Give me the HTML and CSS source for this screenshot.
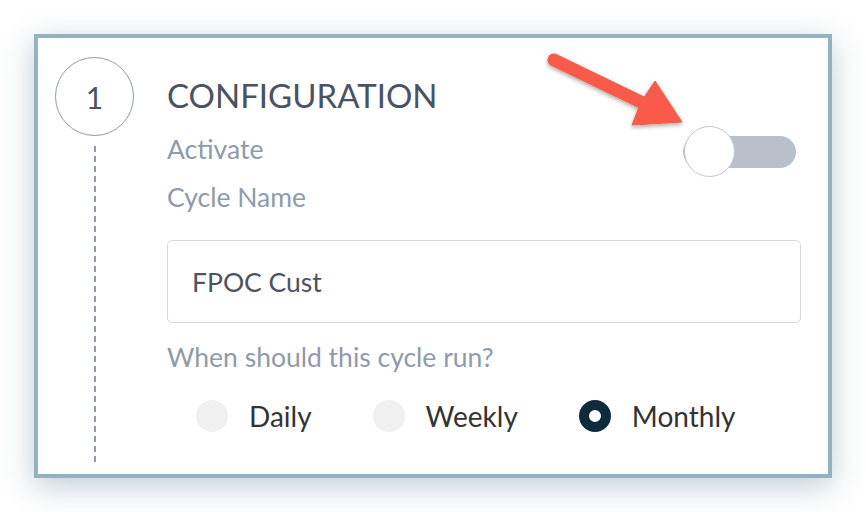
FILE: index.html
```html
<!DOCTYPE html>
<html>
<head>
<meta charset="utf-8">
<link rel="stylesheet" href="styles.css">
</head>
<body>
<div class="page">
  <section class="card">
    <div class="step-col">
      <div class="step-num">1</div>
      <div class="step-line"></div>
    </div>
    <div class="content">
      <h1 class="title">CONFIGURATION</h1>
      <div class="activate-row">
        <span class="label label-activate">Activate</span>
        <div class="toggle"><div class="toggle-knob"></div></div>
      </div>
      <div class="label label-cycle">Cycle Name</div>
      <div class="input">FPOC Cust</div>
      <div class="label label-when">When should this cycle run?</div>
      <div class="radios">
        <div class="radio-item"><span class="radio"></span><span class="radio-text">Daily</span></div>
        <div class="radio-item"><span class="radio"></span><span class="radio-text">Weekly</span></div>
        <div class="radio-item"><span class="radio radio-on"></span><span class="radio-text">Monthly</span></div>
      </div>
    </div>
  </section>
  <svg class="arrow" width="866" height="512" viewBox="0 0 866 512">
    <defs>
      <filter id="sh" x="-20%" y="-20%" width="140%" height="140%">
        <feDropShadow dx="0" dy="2" stdDeviation="2" flood-color="#000" flood-opacity="0.35"/>
      </filter>
    </defs>
    <g filter="url(#sh)" fill="#fa5a48" stroke="#fa5a48">
      <line x1="554" y1="60" x2="645" y2="104" stroke-width="13" stroke-linecap="round"/>
      <polygon points="682,122 655,81 641,102 632,125" stroke-width="1" stroke-linejoin="round"/>
    </g>
  </svg>
</div>
</body>
</html>
```
FILE: styles.css
```css
* { box-sizing: border-box; }
html, body { margin: 0; padding: 0; background: #ffffff; }
body { font-family: "Lato", "Open Sans", sans-serif; }

.page {
  position: relative;
  width: 866px;
  height: 512px;
  padding: 34px;
}

.card {
  width: 798px;
  height: 444px;
  border: 4px solid #94b2c2;
  background: #ffffff;
  box-shadow: 0 8px 30px rgba(60, 95, 120, 0.32);
  display: flex;
  padding: 19px 27px 8px 17px;
  column-gap: 33px;
}

.step-col {
  width: 79px;
  display: flex;
  flex-direction: column;
  align-items: center;
}

.step-num {
  width: 79px;
  height: 79px;
  border: 1.5px solid #8f9aab;
  border-radius: 50%;
  display: flex;
  align-items: center;
  justify-content: center;
  font-size: 30px;
  color: #4a5462;
  flex: none;
}

.step-line {
  margin-top: 10px;
  width: 2px;
  flex: 1;
  background: repeating-linear-gradient(to bottom, #8f9aab 0 6px, transparent 6px 10px);
}

.content {
  flex: 1;
  display: flex;
  flex-direction: column;
}

.title {
  margin: 18px 0 0;
  font-size: 33px;
  line-height: 40px;
  font-weight: 400;
  color: #4a5362;
}

.label {
  font-size: 26.5px;
  line-height: 32px;
  color: #8f9aab;
}

.activate-row {
  margin-top: 11px;
  height: 51px;
  display: flex;
  justify-content: space-between;
  align-items: flex-start;
}

.label-activate { margin-top: 7px; }

.toggle {
  position: relative;
  margin-right: 5px;
  width: 113px;
  height: 51px;
}
.toggle::before {
  content: "";
  position: absolute;
  left: 0;
  right: 0;
  top: 10px;
  height: 32px;
  border-radius: 16px;
  background: #b9c0c8;
}
.toggle-knob {
  position: absolute;
  left: 1px;
  top: 0;
  width: 51px;
  height: 51px;
  border-radius: 50%;
  background: #ffffff;
  border: 1.5px solid #c0c7cf;
}

.label-cycle { margin-top: 4px; }

.input {
  margin-top: 27px;
  height: 83px;
  border: 1px solid #d8d8d8;
  border-radius: 5px;
  display: flex;
  align-items: center;
  padding: 0 24px;
  font-size: 26.5px;
  color: #4a5462;
}

.label-when { margin-top: 18px; }

.radios {
  margin-top: 26px;
  padding-left: 29px;
  display: flex;
  align-items: center;
  column-gap: 61px;
}

.radio-item {
  display: flex;
  align-items: center;
  column-gap: 21px;
}

.radio {
  width: 32px;
  height: 32px;
  border-radius: 50%;
  background: #f0f0f0;
  flex: none;
}
.radio-on {
  background: #ffffff;
  border: 10.5px solid #0d2b3b;
}

.radio-text {
  font-size: 28px;
  line-height: 34px;
  color: #333333;
}

.arrow {
  position: absolute;
  left: 0;
  top: 0;
  pointer-events: none;
}
```
